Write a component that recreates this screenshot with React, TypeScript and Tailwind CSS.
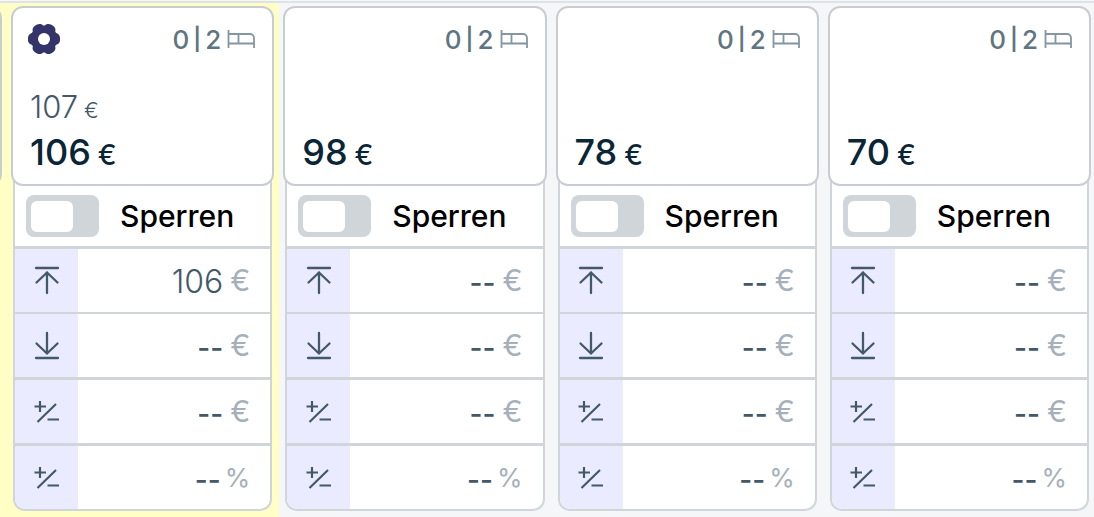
import { useState } from "react";

const days = [
  { id: "d1", today: true, occupied: 0, total: 2, oldPrice: 107, price: 106, min: "106" },
  { id: "d2", today: false, occupied: 0, total: 2, oldPrice: null, price: 98, min: "" },
  { id: "d3", today: false, occupied: 0, total: 2, oldPrice: null, price: 78, min: "" },
  { id: "d4", today: false, occupied: 0, total: 2, oldPrice: null, price: 70, min: "" },
];

type Day = (typeof days)[number];

function GearIcon() {
  return (
    <svg width="32" height="32" viewBox="0 0 32 32" fill="#35346a">
      <circle cx="16" cy="16" r="13.4" />
      <rect x="0" y="10" width="32" height="12" rx="4.800" />
      <rect x="0" y="10" width="32" height="12" rx="4.800" transform="rotate(60 16 16)" />
      <rect x="0" y="10" width="32" height="12" rx="4.800" transform="rotate(120 16 16)" />
      <circle cx="16" cy="16" r="6" fill="#fff" />
    </svg>
  );
}

function BedIcon() {
  return (
    <svg width="28" height="20" viewBox="0 0 28 20" fill="none" stroke="#8496a1" strokeWidth="1.8">
      <path d="M1.500 1v18M1.500 5H23a4 4 0 0 1 4 4V19M1.500 14.500H27M11.500 5V14.500" />
    </svg>
  );
}

function MaxIcon() {
  return (
    <svg width="26" height="30" viewBox="0 0 26 30" fill="none" stroke="#435869" strokeWidth="2.3" strokeLinecap="round">
      <path d="M2 2h22M13 6.500v20.500M2.500 16.500L13 6.500l10.500 10" />
    </svg>
  );
}

function MinIcon() {
  return (
    <svg width="26" height="30" viewBox="0 0 26 30" fill="none" stroke="#435869" strokeWidth="2.3" strokeLinecap="round">
      <path d="M2 27h22M13 2v20.500M2.500 12.500L13 22.500l10.500-10" />
    </svg>
  );
}

function PlusMinusIcon() {
  return (
    <svg width="26" height="24" viewBox="0 0 26 24" fill="none" stroke="#435869" strokeWidth="2.2">
      <path d="M0.500 6.500h11.500M6 1v11M3.500 22L22 4M13.500 19.500h11.500" />
    </svg>
  );
}

const rows = [
  { key: "max", label: "Maximalpreis", unit: "€", Icon: MaxIcon, line: "border-t-[3px]" },
  { key: "min", label: "Minimalpreis", unit: "€", Icon: MinIcon, line: "border-t-2" },
  { key: "abs", label: "Anpassung in Euro", unit: "€", Icon: PlusMinusIcon, line: "border-t-[3px]" },
  { key: "rel", label: "Anpassung in Prozent", unit: "%", Icon: PlusMinusIcon, line: "border-t-[3px]" },
];

function DayColumn({ day }: { day: Day }) {
  const [locked, setLocked] = useState(false);

  return (
    <section className={`pt-[3px] pr-[5px] pb-[6px] pl-1 ${day.today ? "bg-[#ffffc5]" : ""}`}>
      <div className="relative flex h-[180px] flex-col justify-between rounded-xl border-2 border-[#c8cdd4] bg-white px-[15px] pt-[15px] pb-2">
        <div className="flex h-8 items-center justify-between">
          {day.today ? (
            <button type="button" aria-label="Einstellungen">
              <GearIcon />
            </button>
          ) : (
            <span />
          )}
          <div className="flex items-center gap-1 pr-[2px] text-[26px] font-medium text-[#5f7581]">
            <span>{day.occupied}</span>
            <span className="text-[22px] font-semibold">|</span>
            <span className="pr-[2px]">{day.total}</span>
            <BedIcon />
          </div>
        </div>
        <div className="pl-[2px] text-[#0a2536]">
          {day.oldPrice && (
            <p className="flex items-baseline gap-[6px] text-[31px] leading-[42px] font-light text-[#435869]">
              {day.oldPrice}
              <span className="text-[22px]">€</span>
            </p>
          )}
          <p className="flex items-baseline gap-[7px] text-[36px] leading-[42px] font-medium">
            {day.price}
            <span className="text-[28px]">€</span>
          </p>
        </div>
      </div>

      <div className="mx-[2px] -mt-3 overflow-hidden rounded-b-xl border-2 border-[#d0d5d9] bg-white pt-[10px]">
        <label className="flex h-[60px] items-center gap-[21px] pl-[11px] text-[30px] font-medium text-black">
          <input
            type="checkbox"
            checked={locked}
            onChange={(e) => setLocked(e.target.checked)}
            className="flex h-[42px] w-[73px] appearance-none items-center rounded-lg bg-[#d0d5d9] px-[5px] before:h-[31px] before:w-[42px] before:rounded-md before:bg-white checked:justify-end"
          />
          Sperren
        </label>
        {rows.map(({ key, label, unit, Icon, line }) => (
          <div key={key} className={`flex border-[#d0d5d9] ${line}`}>
            <label
              htmlFor={`${day.id}-${key}`}
              aria-label={label}
              className="flex h-[63px] w-[63px] shrink-0 items-center justify-center bg-[#ebebff]"
            >
              <Icon />
            </label>
            <div className={`flex min-w-0 flex-1 items-center pr-5 ${unit === "%" ? "gap-1" : "gap-[7px]"}`}>
              <input
                id={`${day.id}-${key}`}
                type="text"
                placeholder="--"
                defaultValue={key === "max" ? day.min : ""}
                className="w-full min-w-0 pt-[2px] text-right text-[32px] font-light text-[#435869] placeholder:text-[28px] placeholder:font-medium placeholder:text-[#435869]"
              />
              <span className={`text-[#a5b0ba] ${unit === "%" ? "text-[26px]" : "text-[30px]"}`}>{unit}</span>
            </div>
          </div>
        ))}
      </div>
    </section>
  );
}

export default function App() {
  return (
    <main className="overflow-hidden bg-[#f4f6f8] pt-px font-['Inter',sans-serif]">
      <div className="-mr-[2px] grid grid-cols-[7px_repeat(4,minmax(0,1fr))] border-t-2 border-[#dfe2e6]">
        {/* tail of the previous day */}
        <div className="flex justify-end overflow-hidden bg-[#ffffc5] pt-[3px] pr-[5px]">
          <div className="h-[180px] w-[263px] shrink-0 rounded-xl border-2 border-[#c8cdd4] bg-white" />
        </div>
        {days.map((day) => (
          <DayColumn key={day.id} day={day} />
        ))}
      </div>
    </main>
  );
}
